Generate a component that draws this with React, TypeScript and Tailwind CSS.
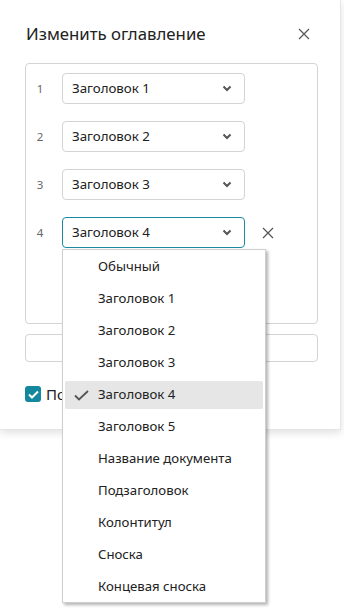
import React from "react";

const font = { fontFamily: '"Noto Sans", "Open Sans", sans-serif' };

const items = [
  "Обычный",
  "Заголовок 1",
  "Заголовок 2",
  "Заголовок 3",
  "Заголовок 4",
  "Заголовок 5",
  "Название документа",
  "Подзаголовок",
  "Колонтитул",
  "Сноска",
  "Концевая сноска",
];

function Chevron() {
  return (
    <svg width="10" height="7" viewBox="0 0 10 7" className="text-[#555]">
      <path d="M1.5 1.5 L5 5 L8.5 1.5" fill="none" stroke="currentColor" strokeWidth="2" />
    </svg>
  );
}

function Cross({ size = 12 }: { size?: number }) {
  return (
    <svg width={size} height={size} viewBox="0 0 12 12" className="text-[#555]">
      <path d="M1 1 L11 11 M11 1 L1 11" fill="none" stroke="currentColor" strokeWidth="1.2" />
    </svg>
  );
}

function Row({ n, value, focused }: { n: number; value: string; focused?: boolean }) {
  return (
    <div className="flex items-center h-[31px]">
      <span className="w-[28px] text-center text-[11.5px] text-[#666]">{n}</span>
      <div
        className={`ml-[8px] w-[183px] h-[31px] rounded-[4px] border flex items-center justify-between pl-[9px] pr-[12px] text-[13.3px] text-[#222] ${
          focused ? "border-[#1a8aa0]" : "border-[#d4d4d4]"
        }`}
      >
        <span>{value}</span>
        <Chevron />
      </div>
      {focused && (
        <span className="ml-[17px] flex items-center">
          <Cross />
        </span>
      )}
    </div>
  );
}

export default function App() {
  return (
    <div className="relative w-[344px] h-[610px] bg-white overflow-hidden" style={font}>
      <div className="w-[341px] h-[430px] bg-white border-r border-b border-[#e6e6e6] shadow-[0_3px_8px_rgba(0,0,0,0.12)]">
        <div className="flex items-center justify-between pl-[26px] pr-[30px] pt-[21px] h-[46px]">
          <h2 className="text-[16.8px] text-[#222]">Изменить оглавление</h2>
          <Cross size={12} />
        </div>
        <div className="ml-[25px] mr-[22px] mt-[17px] h-[261px] rounded-[4px] border border-[#d4d4d4] pt-[9px] flex flex-col gap-[17px]">
          <Row n={1} value="Заголовок 1" />
          <Row n={2} value="Заголовок 2" />
          <Row n={3} value="Заголовок 3" />
          <Row n={4} value="Заголовок 4" focused />
        </div>
        <div className="ml-[25px] mr-[22px] mt-[10px] h-[28px] rounded-[4px] border border-[#d4d4d4]" />
        <div className="flex items-center mx-[25px] mt-[21px]">
          <span className="w-[16px] h-[16px] rounded-[3px] bg-[#12879e] flex items-center justify-center">
            <svg width="11" height="9" viewBox="0 0 11 9">
              <path d="M1 4.5 L4 7.5 L10 1.5" fill="none" stroke="white" strokeWidth="2" />
            </svg>
          </span>
          <span className="ml-[5px] text-[15px] text-[#222]">Показывать номера страниц</span>
        </div>
      </div>

      <div className="absolute left-[62px] top-[249px] w-[204px] h-[354px] bg-white border border-[#cfcfcf] shadow-[2px_2px_3px_rgba(0,0,0,0.3)] px-[2px] pt-[3px]">
        {items.map((it) => {
          const sel = it === "Заголовок 4";
          return (
            <div
              key={it}
              className={`relative h-[28px] mb-[4px] rounded-[2px] flex items-center pl-[33px] text-[13.2px] text-[#222] ${
                sel ? "bg-[#e6e6e6]" : ""
              }`}
            >
              {sel && (
                <svg width="15" height="11" viewBox="0 0 15 11" className="absolute left-[9px] top-[9px]">
                  <path d="M1 5.5 L5 9.5 L14 1" fill="none" stroke="#555" strokeWidth="1.8" />
                </svg>
              )}
              {it}
            </div>
          );
        })}
      </div>
    </div>
  );
}
